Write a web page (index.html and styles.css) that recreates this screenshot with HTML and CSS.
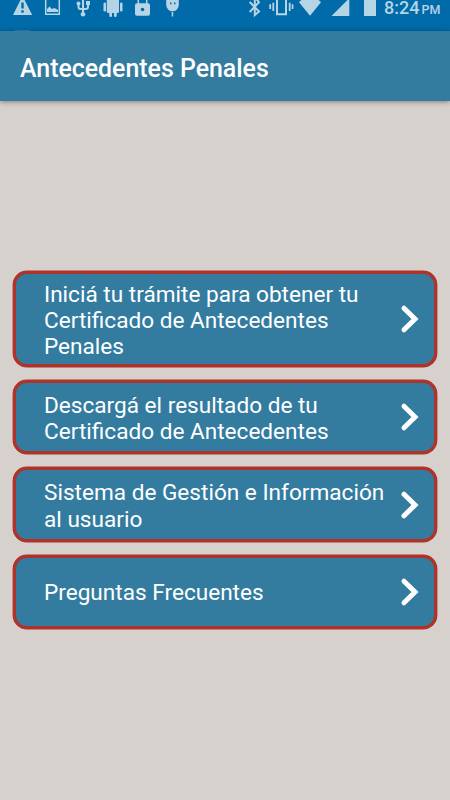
FILE: index.html
```html
<!DOCTYPE html>
<html lang="es">
  <head>
    <meta charset="utf-8">
    <title>Antecedentes Penales</title>
    <link rel="stylesheet" href="styles.css">
  </head>
  <body>
    <div class="status-bar">
      <div class="notifications">
        <svg viewBox="0 0 24 20"><path fill-rule="evenodd" d="M11.500 -4L21.200 15H2Z M10.300 2.500V8.500H12.700V2.500Z M10.300 10.300V12.700H12.700V10.300Z"/></svg>
        <svg viewBox="0 0 24 20"><path class="line" d="M4.700 -1V14.300H18.300V-1"/><path d="M6 12V9L8.500 6.500L11 9L13.500 8L17 10V12Z"/></svg>
        <svg viewBox="0 0 24 20"><path class="line thick" d="M12 -2V15M7.500 3V7Q7.500 9 9.500 9H14.500Q17 9 17 7V3"/><circle cx="12" cy="14.200" r="2.300"/><circle cx="7.500" cy="3.500" r="2"/><path d="M15 1H19V5H15Z"/></svg>
        <svg viewBox="0 0 24 20"><path d="M5.800 0H18V11.500Q18 13 16.500 13H7.300Q5.800 13 5.800 11.500Z"/><rect x="2.500" y="2.500" width="2.500" height="9" rx="1.200"/><rect x="19" y="2.500" width="2.500" height="9" rx="1.200"/><rect x="8.300" y="10" width="2.700" height="7" rx="1.200"/><rect x="13" y="10" width="2.700" height="7" rx="1.200"/></svg>
        <svg viewBox="0 0 24 20"><path class="line" d="M7.300 4V-2M15.700 4V-2"/><path fill-rule="evenodd" d="M6 3.300H17Q19 3.300 19 5.300V13.800Q19 15.800 17 15.800H6Q4 15.800 4 13.800V5.300Q4 3.300 6 3.300ZM11.500 7.700A1.800 1.800 0 1 0 11.500 11.300A1.800 1.800 0 1 0 11.500 7.700Z"/></svg>
        <svg viewBox="0 0 24 20"><path fill-rule="evenodd" d="M5.200 -2H17.800V5A6.300 6.300 0 0 1 5.200 5ZM9 2.500V4.300H10.500V2.500ZM13 2.500V4.300H14.500V2.500Z"/><path d="M10.700 12H12.200V16.500H10.700Z"/></svg>
      </div>
      <div class="system">
        <svg viewBox="0 0 24 20"><path class="line thick" d="M8.700 2L18 11.500L13.800 15V-3L18 2.300L8.700 12"/></svg>
        <svg viewBox="0 0 24 20"><path class="line thick" d="M7 -2V14.200H16V-2"/><path d="M2.400 2.700H4.200V11H2.400ZM18.800 2.700H20.600V11H18.800ZM-.7 4.300H1.100V9H-.7ZM21.700 4.300H23.400V9H21.700Z"/></svg>
        <svg viewBox="0 0 24 20"><path d="M0 2.200Q2 0 6 -2H16Q20 0 22 2.200L11 15.700Z"/></svg>
        <svg viewBox="0 0 24 20"><path d="M3.500 16L21.300 -1.800V16Z"/></svg>
        <svg viewBox="0 0 24 20"><path d="M7 -1H19V16H7Z"/></svg>
        <div class="clock">8:24<span>PM</span></div>
      </div>
    </div>
    <header class="toolbar">
      <h1>Antecedentes Penales</h1>
    </header>
    <main class="menu">
      <button class="option tall">
        <span>Iniciá tu trámite para obtener tu Certificado de Antecedentes Penales</span>
        <svg class="chevron" viewBox="0 0 20 30"><path d="M4 4.200L15 15L4 25.800"/></svg>
      </button>
      <button class="option">
        <span>Descargá el resultado de tu<br>Certificado de Antecedentes</span>
        <svg class="chevron" viewBox="0 0 20 30"><path d="M4 4.200L15 15L4 25.800"/></svg>
      </button>
      <button class="option">
        <span>Sistema de Gestión e Información al usuario</span>
        <svg class="chevron" viewBox="0 0 20 30"><path d="M4 4.200L15 15L4 25.800"/></svg>
      </button>
      <button class="option">
        <span>Preguntas Frecuentes</span>
        <svg class="chevron" viewBox="0 0 20 30"><path d="M4 4.200L15 15L4 25.800"/></svg>
      </button>
    </main>
  </body>
</html>
```

FILE: styles.css
```css
body {
  margin: 0;
  height: 800px;
  overflow: hidden;
  font-family: Roboto, sans-serif;
  background-color: #d6d1cd;
}
.status-bar {
  display: flex;
  justify-content: space-between;
  box-sizing: border-box;
  height: 31px;
  padding: 0 10px 0 11px;
  /* sliver of a covered icon along the bottom edge */
  background: linear-gradient(#2b83b8, #2b83b8) 15px 30px / 15px 1px no-repeat #006ba8;
}
.notifications,
.system {
  display: flex;
  gap: 6px;
}
.system {
  gap: 5px;
  width: 199px;
}
.status-bar svg {
  flex: none;
  width: 24px;
  height: 20px;
  fill: #b5d4e6;
  overflow: visible;
}
.status-bar .line {
  fill: none;
  stroke: #b5d4e6;
  stroke-width: 1.5;
}
.status-bar .thick {
  stroke-width: 2;
}
.clock {
  display: flex;
  align-items: baseline;
  gap: 2px;
  height: 16px;
  margin-left: -2px;
  color: #b5d4e6;
  font-size: 18px;
  font-weight: 500;
  line-height: 16px;
}
.clock span {
  font-size: 12.5px;
}
.toolbar {
  display: flex;
  align-items: center;
  height: 70px;
  padding-left: 20px;
  background-color: #337ca0;
  box-shadow: 0 1px 5px rgba(0, 0, 0, 0.4);
}
h1 {
  margin: 4px 0 0;
  color: #fff;
  font-size: 24.9px;
  font-weight: 500;
}
.menu {
  display: flex;
  flex-direction: column;
  gap: 12.8px;
  padding: 170.4px 13px 0;
}
.option {
  display: flex;
  align-items: center;
  justify-content: space-between;
  box-sizing: border-box;
  height: 74.8px;
  padding: 4px 14px 0 28px;
  border: 3px solid #ae342b;
  border-radius: 14px;
  background-color: #337ca0;
  box-shadow: 0 0 0 0.4px #ae342b;
  color: #fff;
  font-family: Roboto, sans-serif;
  font-size: 22.6px;
  line-height: 26.3px;
  text-align: left;
}
.option.tall {
  height: 95.4px;
}
.option:last-child {
  height: 74px;
  padding-top: 2px;
}
.option span {
  width: 346px;
}
.chevron {
  flex: none;
  width: 20px;
  height: 30px;
  margin: -4px 0 0 -4px;
}
.option:last-child .chevron {
  margin-top: -1px;
}
.chevron path {
  fill: none;
  stroke: #fff;
  stroke-width: 5;
  stroke-linecap: round;
}
```
